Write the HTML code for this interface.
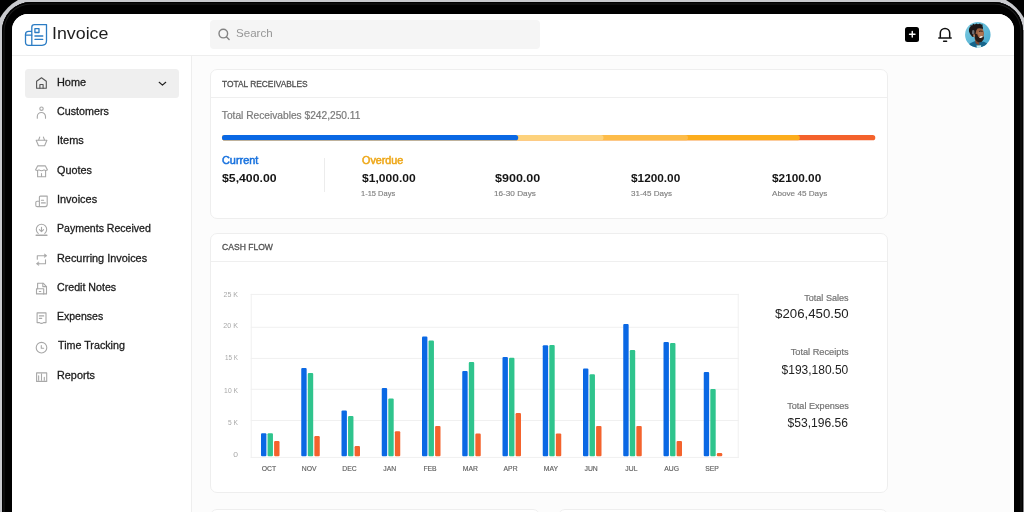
<!DOCTYPE html>
<html>
<head>
<meta charset="utf-8">
<style>
*{margin:0;padding:0;box-sizing:border-box;}
html,body{width:1024px;height:512px;overflow:hidden;background:#000;}
body{font-family:"Liberation Sans",sans-serif;position:relative;color:#222;}
.abs{position:absolute;}
.device{position:absolute;left:-6px;top:-6px;width:1036px;height:700px;border-radius:47px;background:#c9cace;}
.bezel{position:absolute;left:2px;top:2px;width:1021px;height:700px;border-radius:29px;background:#000;box-shadow:inset 0 0 0 1.5px #000, inset 0 0 0 2.5px #1b1b1b;}
.screen{position:absolute;left:12px;top:14px;width:1002px;height:560px;border-radius:16px;background:#fcfcfc;overflow:hidden;}
/* everything inside screen uses page coordinates via this wrapper */
.page{position:absolute;left:-12px;top:-14px;width:1024px;height:512px;will-change:transform;}
.header{position:absolute;left:12px;top:14px;width:1002px;height:42px;background:#fff;border-bottom:1px solid #eeeeee;}
.sidebar{position:absolute;left:12px;top:56px;width:180px;height:456px;background:#fff;border-right:1px solid #eeeeee;}
.t{position:absolute;white-space:nowrap;line-height:1;transform-origin:0 50%;}
.tr{position:absolute;white-space:nowrap;line-height:1;transform-origin:100% 50%;text-align:right;}
.card{position:absolute;background:#fff;border:1px solid #eeeeee;border-radius:7px;}
.nav{font-size:10.2px;color:#1c1c1c;-webkit-text-stroke:0.28px #1c1c1c;left:57.5px;}
.ico{position:absolute;left:34px;width:15px;height:15px;overflow:visible;fill:none;stroke:#9a9a9a;stroke-width:1.1;stroke-linecap:round;stroke-linejoin:round;}
.hd{font-size:9.2px;color:#505050;-webkit-text-stroke:0.3px #505050;}
.amt{font-size:11px;font-weight:bold;color:#151515;}
.days{font-size:7.6px;color:#808080;-webkit-text-stroke:0.15px #808080;}
.ylab{font-size:7.3px;color:#a8a8a8;}
.mlab{position:absolute;white-space:nowrap;line-height:1;font-size:6.8px;color:#606060;-webkit-text-stroke:0.15px #606060;text-align:center;width:30px;}
.slab{font-size:8.7px;color:#747474;-webkit-text-stroke:0.2px #747474;}
.sval{font-size:12px;color:#222;}
.grid{position:absolute;left:251px;width:488px;height:1px;background:#efefef;}
.bar{position:absolute;width:5.4px;border-radius:1.2px;}
.b{background:#0a68e4;}
.g{background:#2fc48d;}
.o{background:#f4632d;}
</style>
</head>
<body>
<div class="device"></div>
<div class="bezel"></div>
<div class="abs" style="left:1023px;top:30px;width:1px;height:490px;background:rgba(0,0,0,0.35);"></div>
<div class="screen"><div class="page">

<div class="header"></div>
<div class="sidebar"></div>

<!-- LOGO -->
<svg class="abs" style="left:24px;top:23px;width:24px;height:24px;overflow:visible" viewBox="0 0 24 24" fill="none" stroke="#2b7cc4" stroke-width="1.3" stroke-linecap="round" stroke-linejoin="round">
<path d="M7.8 22.3 V4.2 Q7.8 1.6 10.4 1.6 H22.5 V17.8 Q22.5 22.3 18 22.3 H4.6 Q1.5 22.3 1.5 19.2 V11.4 Q1.5 8.3 4.6 8.3 H7.8"/>
<path d="M1.5 12.1 H7.8"/>
<rect x="10.9" y="5.6" width="4.1" height="3.9"/>
<path d="M10.9 13 H18.8 M10.9 16.3 H18.8"/>
</svg>

<!-- SEARCH -->
<div class="abs" style="left:210px;top:20.4px;width:330px;height:28.6px;background:#f5f5f5;border-radius:4px;"></div>
<svg class="abs" style="left:217px;top:27px;width:14px;height:14px;overflow:visible" viewBox="0 0 14 14" fill="none" stroke="#838383" stroke-width="1.4" stroke-linecap="round"><circle cx="6.3" cy="6.6" r="4.3"/><path d="M9.6 9.9 L12.1 12.4"/></svg>

<!-- TOP RIGHT -->
<div class="abs" style="left:905.1px;top:27.3px;width:14.4px;height:14.4px;background:#000;border-radius:2.5px;"></div>
<svg class="abs" style="left:905.1px;top:27.4px;width:14.5px;height:14.5px" viewBox="0 0 14.5 14.5" stroke="#fff" stroke-width="1.4" stroke-linecap="round"><path d="M7.25 4.5 V10 M4.5 7.25 H10"/></svg>
<svg class="abs" style="left:937px;top:26px;width:16px;height:17px;overflow:visible" viewBox="0 0 16 17" fill="none" stroke="#111" stroke-width="1.5" stroke-linecap="round" stroke-linejoin="round"><path d="M3.3 11.7 V7.1 A4.7 4.7 0 0 1 12.7 7.1 V11.7 M1.8 12 H14.2 M6.6 15.2 H9.6"/></svg>
<svg class="abs" style="left:960px;top:16px;width:40px;height:36px" viewBox="0 0 40 36">
<defs><linearGradient id="avbg" x1="0" y1="0" x2="1" y2="1"><stop offset="0" stop-color="#8ed4e7"/><stop offset="1" stop-color="#2f9cc5"/></linearGradient>
<clipPath id="avc"><circle cx="17.8" cy="18.7" r="12.75"/></clipPath>
<filter id="avf" x="-10%" y="-10%" width="120%" height="120%"><feGaussianBlur stdDeviation="0.35"/></filter></defs>
<g clip-path="url(#avc)">
<rect x="0" y="0" width="40" height="36" fill="url(#avbg)"/>
<g filter="url(#avf)">
<path d="M7 33 L8.4 28.6 Q11 26.4 14.6 25.2 L24 25.8 Q27.6 27 29.4 30 L30.4 33 Z" fill="#15658b"/>
<path d="M16.4 29.6 L21.2 29.2 L20.8 32.4 L17.2 32.4 Z" fill="#c9eeee"/>
<path d="M14.6 22 L19.5 24 L19.2 29.2 L15.8 27.6 Z" fill="#7c4730"/>
<ellipse cx="19.3" cy="17.4" rx="4.7" ry="5.8" fill="#9c6242"/>
<ellipse cx="20.6" cy="17.6" rx="2.6" ry="2.6" fill="#b0734f"/>
<path d="M19 14.9 Q20.6 14.2 22.6 15 L22.6 15.9 Q20.6 15.3 19 16 Z" fill="#3b241b"/>
<path d="M14.2 19 Q14.8 24.8 18.4 26.2 Q21.8 26.8 23.6 23.4 Q24.4 21.8 23.6 20.2 Q22 22.4 19.4 21.6 Q17.6 20.6 17.4 18.4 L15.2 17.2 Z" fill="#271a16"/>
<ellipse cx="21" cy="20.9" rx="1.8" ry="0.8" transform="rotate(-18 21 20.9)" fill="#f6f1ec"/>
<path d="M9 15.6 Q8.6 11.6 10.6 10.4 L10.4 9 L12.2 9.4 L13 7.8 L14.8 8.6 L16.4 7.4 L18 8.2 L20 7.4 L21 8.6 L22.8 8.6 L22.4 10 Q23.4 11.6 22.8 13.2 Q20.6 11.8 17.6 12.6 Q16 14.2 15.8 16.8 Q15 17.4 14.8 19.4 Q13.2 21.8 12 20.6 Q10 18.8 9 15.6 Z" fill="#1c1817"/>
<path d="M12.2 14.4 Q13.6 13.6 14.4 14.8 L14.4 18 Q13 19 12 17.4 Z" fill="#6d6e72"/>
<ellipse cx="14.1" cy="19.4" rx="0.9" ry="1.5" fill="#b67c59"/>
</g>
</g>
</svg>

<!-- NAV -->
<div class="abs" style="left:25px;top:68.8px;width:154px;height:28.8px;background:#efefef;border-radius:3.5px;"></div>
<div class="t " style="left:52.26px;top:25px;font-size:17px;color:#1e1e1e;transform:scaleX(1.0475);">Invoice</div>
<div class="t " style="left:236.27px;top:28px;font-size:11.2px;color:#969696;transform:scaleX(1.0346);">Search</div>
<svg class="ico" style="top:74.60px;stroke:#555" viewBox="0 0 15 15"><path d="M2.6 6.3 L7.5 2.7 L12.3 6.3 V13.3 H2.6 Z"/><path d="M5.9 13.3 V9.5 H9.1 V13.3"/></svg>
<div class="t nav" style="left:57.01px;top:78px;transform:scaleX(1.0696);">Home</div>
<svg class="ico" style="top:103.93px;stroke:#a8a8a8" viewBox="0 0 15 15"><circle cx="7.5" cy="4.7" r="1.7"/><path d="M3.3 14.3 V12.6 A4.1 4.1 0 0 1 11.5 12.6 V14.3"/></svg>
<div class="t nav" style="left:57.36px;top:107px;transform:scaleX(1.0521);">Customers</div>
<svg class="ico" style="top:133.26px;stroke:#a8a8a8" viewBox="0 0 15 15"><path d="M2.2 7.3 H12.9 L10.6 12.8 H4.5 Z"/><path d="M4.7 7 L5.7 4.1 M10.5 7 L9.4 4.1"/></svg>
<div class="t nav" style="left:56.89px;top:136px;transform:scaleX(1.0757);">Items</div>
<svg class="ico" style="top:162.59px;stroke:#a8a8a8" viewBox="0 0 15 15"><path d="M3.6 2.9 H11.4 L13.5 6.9 Q11.8 8.1 10 6.9 Q7.5 8.5 5 6.9 Q3.2 8.1 1.5 6.9 Z"/><path d="M3.6 7.6 V13.7 H11.6 V7.6 M7.5 10.6 V13.7"/></svg>
<div class="t nav" style="left:57.39px;top:166px;transform:scaleX(1.0622);">Quotes</div>
<svg class="ico" style="top:191.92px;stroke:#a8a8a8" viewBox="0 0 15 15"><path d="M5.4 14.6 V5.1 Q5.4 4.1 6.4 4.1 H13.2 V12.6 Q13.2 14.6 11.2 14.6 H3.2 Q1.8 14.6 1.8 13.2 V10.6 Q1.8 9.3 3.1 9.3 H5.4"/><path d="M7.4 8.3 H9.6 M7.4 10.9 H11.3"/></svg>
<div class="t nav" style="left:56.89px;top:195px;transform:scaleX(1.0731);">Invoices</div>
<svg class="ico" style="top:221.25px;stroke:#a8a8a8" viewBox="0 0 15 15"><path d="M4.2 12.4 A5.2 5.2 0 1 1 10.8 12.4"/><path d="M7.5 6.3 V10.6 M5.4 8.6 L7.5 10.7 L9.6 8.6"/><path d="M2.2 14.2 H12.9" stroke-width="1.5"/></svg>
<div class="t nav" style="left:57.03px;top:224px;transform:scaleX(1.0357);">Payments Received</div>
<svg class="ico" style="top:250.58px;stroke:#a8a8a8" viewBox="0 0 15 15"><path d="M3.3 8.3 V4.7 H11.4"/><path d="M10.8 3.1 L12.9 4.7 L10.8 6.3 Z" fill="#a8a8a8" stroke-width="0.6"/><path d="M11.5 8.9 V12.7 H3.8"/><path d="M4.4 11.1 L2.3 12.7 L4.4 14.3 Z" fill="#a8a8a8" stroke-width="0.6"/></svg>
<div class="t nav" style="left:57.01px;top:254px;transform:scaleX(1.0677);">Recurring Invoices</div>
<svg class="ico" style="top:279.91px;stroke:#a8a8a8" viewBox="0 0 15 15"><path d="M3.6 8.8 V3.2 H9.2 L12.5 6.6 V13.9 H9.7"/><path d="M8.8 3.4 V6.6 H12.3"/><rect x="2.5" y="8.8" width="7.2" height="5.1"/><path d="M5.3 11.5 H6.8"/></svg>
<div class="t nav" style="left:57.36px;top:283px;transform:scaleX(1.0442);">Credit Notes</div>
<svg class="ico" style="top:309.24px;stroke:#a8a8a8" viewBox="0 0 15 15"><path d="M3.1 3.9 H12 V13.6 H9.5 Q7.5 15.2 5.5 13.6 H3.1 Z"/><path d="M5.4 6.9 H9.7 M5.4 9.4 H7.7"/></svg>
<div class="t nav" style="left:57.04px;top:312px;transform:scaleX(1.0311);">Expenses</div>
<svg class="ico" style="top:338.57px;stroke:#a8a8a8" viewBox="0 0 15 15"><circle cx="7.5" cy="8.7" r="5.3"/><path d="M7.3 6.5 V9.3 H9.6"/></svg>
<div class="t nav" style="left:57.66px;top:341px;transform:scaleX(1.0525);">Time Tracking</div>
<svg class="ico" style="top:367.90px;stroke:#a8a8a8" viewBox="0 0 15 15"><rect x="2.6" y="4.9" width="10.1" height="8.5"/><path d="M4.65 12.2 V7.7 M7.5 12.2 V5.9 M10.3 12.2 V9.3"/></svg>
<div class="t nav" style="left:57.01px;top:371px;transform:scaleX(1.0648);">Reports</div>
<svg class="abs" style="left:158px;top:79.5px;width:9px;height:7px;overflow:visible" viewBox="0 0 9 7" fill="none" stroke="#222" stroke-width="1.2" stroke-linecap="round" stroke-linejoin="round"><path d="M1.2 2.3 L4.45 5.1 L7.7 2.3"/></svg>
<div class="card" style="left:210px;top:69px;width:678px;height:149.5px;"></div>
<div class="abs" style="left:211px;top:97px;width:676px;height:1px;background:#efefef;"></div>
<div class="t hd" style="left:222.01px;top:80px;transform:scaleX(0.9102);">TOTAL RECEIVABLES</div>
<div class="t " style="left:221.87px;top:111px;font-size:10.2px;color:#7a7a7a;-webkit-text-stroke:0.2px #7a7a7a;">Total Receivables $242,250.11</div>
<svg class="abs" style="left:0;top:0;width:1024px;height:512px" viewBox="0 0 1024 512"><rect x="222" y="135.05" width="653.3" height="5.2" rx="2.6" fill="#f4622c"/><rect x="222" y="135.05" width="577.8" height="5.2" rx="2.6" fill="#fcad1d"/><rect x="222" y="135.05" width="466.0" height="5.2" rx="2.6" fill="#fdbc49"/><rect x="222" y="135.05" width="381.5" height="5.2" rx="2.6" fill="#fdd27c"/><rect x="222" y="135.05" width="296.2" height="5.2" rx="2.6" fill="#0a68e4"/></svg>
<div class="t " style="left:221.95px;top:156px;font-size:10px;color:#1a73de;-webkit-text-stroke:0.5px #1a73de;transform:scaleX(1.0891);">Current</div>
<div class="t amt" style="left:221.84px;top:173px;transform:scaleX(1.1150);">$5,400.00</div>
<div class="abs" style="left:324px;top:158px;width:1px;height:34px;background:#ececec;"></div>
<div class="t " style="left:361.79px;top:156px;font-size:10px;color:#eea81a;-webkit-text-stroke:0.5px #eea81a;transform:scaleX(1.0777);">Overdue</div>
<div class="t amt" style="left:361.64px;top:173px;transform:scaleX(1.0964);">$1,000.00</div>
<div class="t days" style="left:361.23px;top:190px;transform:scaleX(0.9875);">1-15 Days</div>
<div class="t amt" style="left:494.83px;top:173px;transform:scaleX(1.1386);">$900.00</div>
<div class="t days" style="left:494.38px;top:190px;transform:scaleX(1.0766);">16-30 Days</div>
<div class="t amt" style="left:631.24px;top:173px;transform:scaleX(1.0730);">$1200.00</div>
<div class="t days" style="left:631.09px;top:190px;transform:scaleX(1.0580);">31-45 Days</div>
<div class="t amt" style="left:771.84px;top:173px;transform:scaleX(1.0730);">$2100.00</div>
<div class="t days" style="left:771.98px;top:190px;transform:scaleX(1.0740);">Above 45 Days</div>
<div class="card" style="left:210px;top:233px;width:678px;height:259.5px;"></div>
<div class="abs" style="left:211px;top:261px;width:676px;height:1px;background:#efefef;"></div>
<div class="t hd" style="left:221.66px;top:243px;transform:scaleX(0.9330);">CASH FLOW</div>
<div class="tr ylab" style="right:785.92px;top:291px;transform:scaleX(0.9680);">25 K</div>
<div class="tr ylab" style="right:785.92px;top:322px;transform:scaleX(0.9817);">20 K</div>
<div class="tr ylab" style="right:785.93px;top:354px;transform:scaleX(0.8625);">15 K</div>
<div class="tr ylab" style="right:785.92px;top:387px;transform:scaleX(0.9251);">10 K</div>
<div class="tr ylab" style="right:785.93px;top:419px;transform:scaleX(0.9075);">5 K</div>
<div class="tr ylab" style="right:785.67px;top:451px;transform:scaleX(1.1740);">0</div>
<div class="mlab" style="left:253.90px;top:466px;">OCT</div>
<div class="mlab" style="left:294.18px;top:466px;">NOV</div>
<div class="mlab" style="left:334.46px;top:466px;">DEC</div>
<div class="mlab" style="left:374.74px;top:466px;">JAN</div>
<div class="mlab" style="left:415.02px;top:466px;">FEB</div>
<div class="mlab" style="left:455.30px;top:466px;">MAR</div>
<div class="mlab" style="left:495.58px;top:466px;">APR</div>
<div class="mlab" style="left:535.86px;top:466px;">MAY</div>
<div class="mlab" style="left:576.14px;top:466px;">JUN</div>
<div class="mlab" style="left:616.42px;top:466px;">JUL</div>
<div class="mlab" style="left:656.70px;top:466px;">AUG</div>
<div class="mlab" style="left:696.98px;top:466px;">SEP</div>
<svg class="abs" style="left:0;top:0;width:1024px;height:512px" viewBox="0 0 1024 512"><rect x="250.7" y="293.90" width="488" height="1" fill="#f0f0f0"/><rect x="250.7" y="326.80" width="488" height="1" fill="#f0f0f0"/><rect x="250.7" y="357.90" width="488" height="1" fill="#f0f0f0"/><rect x="250.7" y="388.80" width="488" height="1" fill="#f0f0f0"/><rect x="250.7" y="420.00" width="488" height="1" fill="#f0f0f0"/><rect x="250.7" y="456.90" width="488" height="1" fill="#f0f0f0"/><rect x="250.7" y="293.9" width="1" height="164" fill="#f0f0f0"/><rect x="737.7" y="293.9" width="1" height="164" fill="#f0f0f0"/><rect x="261.00" y="433.2" width="5.4" height="23.1" rx="1.1" fill="#0a68e4"/><rect x="267.55" y="433.2" width="5.4" height="23.1" rx="1.1" fill="#2fc48d"/><rect x="274.10" y="441.1" width="5.4" height="15.2" rx="1.1" fill="#f4632d"/><rect x="301.25" y="368.0" width="5.4" height="88.3" rx="1.1" fill="#0a68e4"/><rect x="307.80" y="373.0" width="5.4" height="83.3" rx="1.1" fill="#2fc48d"/><rect x="314.35" y="436.1" width="5.4" height="20.2" rx="1.1" fill="#f4632d"/><rect x="341.50" y="410.4" width="5.4" height="45.9" rx="1.1" fill="#0a68e4"/><rect x="348.05" y="416.0" width="5.4" height="40.3" rx="1.1" fill="#2fc48d"/><rect x="354.60" y="446.1" width="5.4" height="10.2" rx="1.1" fill="#f4632d"/><rect x="381.75" y="388.0" width="5.4" height="68.3" rx="1.1" fill="#0a68e4"/><rect x="388.30" y="398.4" width="5.4" height="57.9" rx="1.1" fill="#2fc48d"/><rect x="394.85" y="431.2" width="5.4" height="25.1" rx="1.1" fill="#f4632d"/><rect x="422.00" y="336.5" width="5.4" height="119.8" rx="1.1" fill="#0a68e4"/><rect x="428.55" y="340.5" width="5.4" height="115.8" rx="1.1" fill="#2fc48d"/><rect x="435.10" y="425.9" width="5.4" height="30.4" rx="1.1" fill="#f4632d"/><rect x="462.25" y="371.0" width="5.4" height="85.3" rx="1.1" fill="#0a68e4"/><rect x="468.80" y="362.0" width="5.4" height="94.3" rx="1.1" fill="#2fc48d"/><rect x="475.35" y="433.6" width="5.4" height="22.7" rx="1.1" fill="#f4632d"/><rect x="502.50" y="357.0" width="5.4" height="99.3" rx="1.1" fill="#0a68e4"/><rect x="509.05" y="357.8" width="5.4" height="98.5" rx="1.1" fill="#2fc48d"/><rect x="515.60" y="413.1" width="5.4" height="43.2" rx="1.1" fill="#f4632d"/><rect x="542.75" y="345.2" width="5.4" height="111.1" rx="1.1" fill="#0a68e4"/><rect x="549.30" y="345.0" width="5.4" height="111.3" rx="1.1" fill="#2fc48d"/><rect x="555.85" y="433.4" width="5.4" height="22.9" rx="1.1" fill="#f4632d"/><rect x="583.00" y="368.5" width="5.4" height="87.8" rx="1.1" fill="#0a68e4"/><rect x="589.55" y="374.2" width="5.4" height="82.1" rx="1.1" fill="#2fc48d"/><rect x="596.10" y="426.0" width="5.4" height="30.3" rx="1.1" fill="#f4632d"/><rect x="623.25" y="324.0" width="5.4" height="132.3" rx="1.1" fill="#0a68e4"/><rect x="629.80" y="350.1" width="5.4" height="106.2" rx="1.1" fill="#2fc48d"/><rect x="636.35" y="426.0" width="5.4" height="30.3" rx="1.1" fill="#f4632d"/><rect x="663.50" y="342.0" width="5.4" height="114.3" rx="1.1" fill="#0a68e4"/><rect x="670.05" y="343.0" width="5.4" height="113.3" rx="1.1" fill="#2fc48d"/><rect x="676.60" y="441.0" width="5.4" height="15.3" rx="1.1" fill="#f4632d"/><rect x="703.75" y="372.0" width="5.4" height="84.3" rx="1.1" fill="#0a68e4"/><rect x="710.30" y="389.0" width="5.4" height="67.3" rx="1.1" fill="#2fc48d"/><rect x="716.85" y="453.1" width="5.4" height="3.2" rx="1.1" fill="#f4632d"/></svg>
<div class="tr slab" style="right:175.07px;top:294px;transform:scaleX(1.0407);">Total Sales</div>
<div class="tr sval" style="right:175.68px;top:308px;transform:scaleX(1.1038);">$206,450.50</div>
<div class="tr slab" style="right:175.07px;top:348px;transform:scaleX(1.0616);">Total Receipts</div>
<div class="tr sval" style="right:175.73px;top:364px;">$193,180.50</div>
<div class="tr slab" style="right:175.07px;top:402px;transform:scaleX(1.0477);">Total Expenses</div>
<div class="tr sval" style="right:175.67px;top:417px;transform:scaleX(1.0066);">$53,196.56</div>
<div class="card" style="left:210px;top:509px;width:330px;height:60px;"></div>
<div class="card" style="left:558px;top:509px;width:330px;height:60px;"></div>

</div></div>
</body>
</html>
